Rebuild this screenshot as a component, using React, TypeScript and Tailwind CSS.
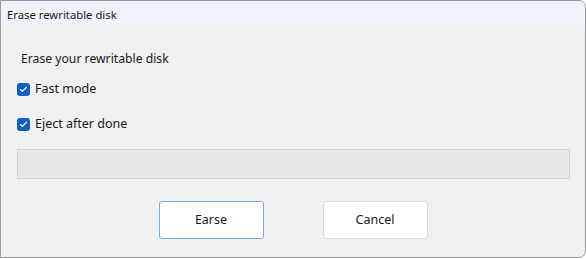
import { Check } from "lucide-react";

const CheckRow = ({ label }: { label: string }) => (
  <label className="flex items-center gap-[5px] h-[20px]">
    <span className="w-[13px] h-[13px] rounded-[3px] bg-[#0f5fc2] flex items-center justify-center">
      <Check className="w-[9px] h-[9px] text-white" strokeWidth={3} />
    </span>
    <span className="text-[12.5px] text-[#1a1a1a]">{label}</span>
  </label>
);

export default function App() {
  return (
    <div
      className="w-[586px] h-[259px] bg-white"
      style={{ fontFamily: '"Noto Sans", "Open Sans", sans-serif' }}
    >
      <div className="w-[586px] h-[258px] border border-[#9a9a9a] rounded-tr-[7px] rounded-br-[7px] bg-[#f0f0f0] flex flex-col overflow-hidden">
        <div className="h-[29px] bg-[#eef3fa] flex items-center pl-[6px] text-[11.3px] text-[#1a1a1a] shrink-0">
          Erase rewritable disk
        </div>
        <div className="flex flex-col px-[16px]">
          <div className="pt-[19px] pl-[4px] text-[12.2px] text-[#1a1a1a] h-[41px] leading-[20px]">
            Erase your rewritable disk
          </div>
          <div className="flex flex-col gap-[15px] pt-[8px]">
            <CheckRow label="Fast mode" />
            <CheckRow label="Eject after done" />
          </div>
          <div className="mt-[15px] w-[553px] h-[30px] border border-[#d2d2d2] bg-[#e6e6e6]" />
          <div className="flex justify-center gap-[59px] mt-[22px]">
            <button className="w-[105px] h-[38px] bg-white border border-[#74abe3] rounded-[3px] text-[12.5px] text-[#1a1a1a]">
              Earse
            </button>
            <button className="w-[105px] h-[38px] bg-white border border-[#dcdcdc] rounded-[3px] text-[12.5px] text-[#1a1a1a]">
              Cancel
            </button>
          </div>
        </div>
      </div>
    </div>
  );
}
